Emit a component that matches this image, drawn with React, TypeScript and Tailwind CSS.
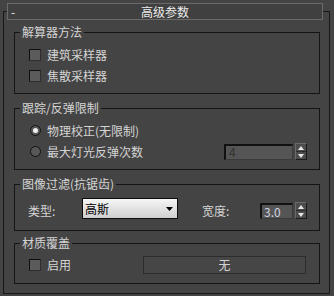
import type { ReactNode } from "react";

const FONT = "font-['Noto_Sans_CJK_SC','Noto_Sans',sans-serif]";

type GroupProps = {
  title: string;
  className: string;
  children: ReactNode;
};

const Group = ({ title, className, children }: GroupProps) => (
  <div className={`relative border border-[#151515] ${className}`}>
    <span className="absolute left-[5px] top-[-9px] bg-[#444444] px-[2px] leading-[16px]">
      {title}
    </span>
    {children}
  </div>
);

const Checkbox = () => (
  <span className="h-[12px] w-[12px] shrink-0 border border-t-[#101010] border-l-[#101010] border-r-[#2e2e2e] border-b-[#2e2e2e] bg-[#5b5b5b]" />
);

const Radio = ({ checked }: { checked?: boolean }) => (
  <span className="flex h-[11px] w-[11px] shrink-0 items-center justify-center rounded-full border border-[#121212] bg-[#575757]">
    {checked && <span className="h-[5px] w-[5px] rounded-full bg-[#f0f0f0]" />}
  </span>
);

const Spinner = () => (
  <div className="flex h-[17px] w-[12px] shrink-0 flex-col border border-t-[#6a6a6a] border-l-[#6a6a6a] border-r-[#1a1a1a] border-b-[#1a1a1a] bg-[#4c4c4c]">
    <div className="flex flex-1 items-center justify-center border-b border-[#2a2a2a]">
      <svg width="6" height="4" viewBox="0 0 6 4">
        <path d="M0 4 L3 0 L6 4 Z" fill="#e6e6e6" />
      </svg>
    </div>
    <div className="flex flex-1 items-center justify-center">
      <svg width="6" height="4" viewBox="0 0 6 4">
        <path d="M0 0 L6 0 L3 4 Z" fill="#e6e6e6" />
      </svg>
    </div>
  </div>
);

export default function App() {
  return (
    <div
      className={`h-[296px] w-[334px] overflow-hidden bg-[#444444] pt-[3px] text-[12px] leading-[16px] text-[#d4d4d4] ${FONT}`}
    >
      <div className="relative z-10 ml-[7px] grid h-[17px] w-[316px] grid-cols-[20px_1fr_20px] items-center border border-[#6a6a6a] bg-[#404040] text-[#ececec]">
        <span className="pl-[3px] leading-[14px]">-</span>
        <span className="text-center leading-[14px]">高级参数</span>
        <span />
      </div>

      <div className="-mt-[9px] ml-[3px] h-[283px] w-[327px] border border-[#181818] pl-[10px] pr-[9px] pt-[20px]">
        <Group title="解算器方法" className="h-[62px] pt-[11px]">
          <div className="flex h-[21px] items-center gap-[6px] pl-[14px]">
            <Checkbox />
            <span>建筑采样器</span>
          </div>
          <div className="flex h-[21px] items-center gap-[6px] pl-[14px]">
            <Checkbox />
            <span>焦散采样器</span>
          </div>
        </Group>

        <Group title="跟踪/反弹限制" className="mt-[14px] h-[62px] pt-[11px]">
          <div className="flex h-[21px] items-center gap-[6px] pl-[15px]">
            <Radio checked />
            <span>物理校正(无限制)</span>
          </div>
          <div className="flex h-[21px] items-center pl-[15px] pr-[12px]">
            <Radio />
            <span className="ml-[6px]">最大灯光反弹次数</span>
            <span className="flex-1" />
            <div className="flex h-[16px] w-[69px] items-center border-l-2 border-t-2 border-r border-b border-l-[#111111] border-t-[#111111] border-r-[#3a3a3a] border-b-[#3a3a3a] bg-[#555555] pl-[3px] text-[#35322b]">
              4
            </div>
            <span className="ml-[2px]">
              <Spinner />
            </span>
          </div>
        </Group>

        <Group title="图像过滤(抗锯齿)" className="mt-[14px] h-[47px] pt-[13px]">
          <div className="flex h-[21px] items-end pl-[13px]">
            <span className="w-[54px]">类型:</span>
            <div className="flex h-[21px] w-[96px] items-center justify-between border border-[#0c0c0c] bg-gradient-to-b from-[#f6f6f6] to-[#cfcfcf] pl-[2px] pr-[4px] text-[#000000]">
              <span>高斯</span>
              <svg width="7" height="4" viewBox="0 0 7 4">
                <path d="M0 0 L7 0 L3.5 4 Z" fill="#000000" />
              </svg>
            </div>
            <span className="ml-[24px] w-[58px]">宽度:</span>
            <div className="flex h-[16px] w-[33px] items-center border-l-2 border-t-2 border-r border-b border-l-[#111111] border-t-[#111111] border-r-[#3a3a3a] border-b-[#3a3a3a] bg-[#555555] pl-[2px] text-[#cdd3e0]">
              3.0
            </div>
            <span className="ml-[2px]">
              <Spinner />
            </span>
          </div>
        </Group>

        <Group title="材质覆盖" className="mt-[12px] h-[41px] pt-[12px]">
          <div className="flex h-[18px] items-center pl-[14px] pr-[13px]">
            <Checkbox />
            <span className="ml-[6px]">启用</span>
            <span className="flex-1" />
            <button
              type="button"
              className="flex h-[18px] w-[163px] items-center justify-center border border-[#2c2c2c] bg-[#464646] text-[#d4d4d4]"
            >
              无
            </button>
          </div>
        </Group>
      </div>
    </div>
  );
}
